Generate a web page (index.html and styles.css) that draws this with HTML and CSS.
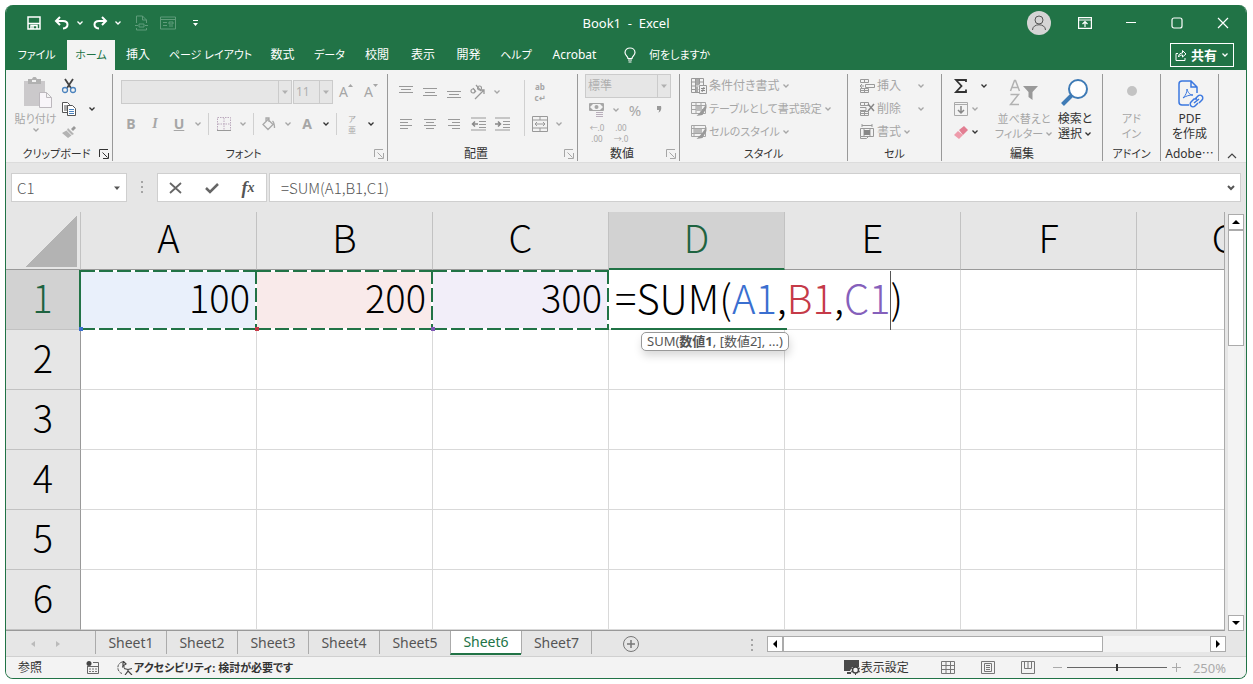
FILE: index.html
```html
<!DOCTYPE html>
<html lang="ja">

<head>
  <meta charset="UTF-8">
  <meta name="viewport" content="width=device-width, initial-scale=1.0">
  <title>Book1 - Excel</title>
  <link rel="stylesheet" href="styles.css">
</head>

<body>
  <!-- 共通アイコン -->
  <svg class="defs" width="0" height="0">
    <symbol id="chev" viewBox="0 0 8 8"><path d="M1.500 2.500 4 5l2.500-2.500" fill="none" stroke="currentColor" stroke-width="1.300"/></symbol>
    <symbol id="launch" viewBox="0 0 10 10"><path d="M.5 8V.5H9M3.500 3.500l5 5M9.500 4v5.500H4" fill="none" stroke="currentColor"/></symbol>
    <symbol id="tri" viewBox="0 0 8 8"><path d="M1 2.500h6L4 6z" fill="currentColor"/></symbol>
  </svg>

  <div class="window">
    <header class="titlebar">
      <div class="quick">
        <button class="q-save" aria-label="保存"><svg width="14" height="14" viewBox="0 0 14 14"><path d="M1 1h12v12H1zM1.500 7.500h11M4 13V9.500h6V13M6 10v3" fill="none" stroke="#fff" stroke-width="1.500"/></svg></button>
        <button class="q-undo" aria-label="元に戻す"><svg width="16" height="14" viewBox="0 0 16 14"><path d="M6 1 2 5l4 4M2 5h7c6 0 6 7 0 7.500" fill="none" stroke="#fff" stroke-width="2"/></svg></button>
        <button class="q-chev" aria-label="元に戻す一覧"><svg width="8" height="8"><use href="#chev"/></svg></button>
        <button class="q-undo" aria-label="やり直し"><svg width="16" height="14" viewBox="0 0 16 14"><path d="m10 1 4 4-4 4M14 5H7c-6 0-6 7 0 7.500" fill="none" stroke="#fff" stroke-width="2"/></svg></button>
        <button class="q-chev" aria-label="やり直し一覧"><svg width="8" height="8"><use href="#chev"/></svg></button>
        <button class="q-dim" aria-label="ページ"><svg width="13" height="16" viewBox="0 0 13 16"><path d="M1.500 8V1h6l4 4v3M7.500 1v4h4M1.500 13v2h10v-2M0 10.500h3M10 10.500h3M4 9h5v3H4z" fill="none" stroke="currentColor"/></svg></button>
        <button class="q-dim" aria-label="フォーム"><svg width="16" height="14" viewBox="0 0 16 14"><path d="M.5 1h15v12H.5zM.5 3.500h15M3 6.500h4M3 9.500h4M9 6h4v2H9zM9 10h4" fill="none" stroke="currentColor"/></svg></button>
        <button class="q-more" aria-label="カスタマイズ"><svg width="8" height="8" viewBox="0 0 8 8"><path d="M2 1h5v1H2zM2 4h5L4.500 7z" fill="#fff"/></svg></button>
      </div>
      <div class="doc-title">Book1&nbsp; -&nbsp; Excel</div>
      <div class="win-buttons">
        <button aria-label="アカウント"><svg width="24" height="24" viewBox="0 0 24 24"><circle cx="12" cy="12" r="12" fill="#d5d5d5"/><circle cx="12" cy="9" r="4" fill="none" stroke="#555"/><path d="M5.500 19c0-7 13-7 13 0" fill="none" stroke="#555"/></svg></button>
        <button aria-label="リボン表示"><svg width="14" height="12" viewBox="0 0 14 12"><path d="M.6.600h12.800v10.800H.6zM.6 3h12.800M7 10V5M4.500 7 7 4.500 9.500 7" fill="none" stroke="#fff" stroke-width="1.200"/></svg></button>
        <button aria-label="最小化"><svg width="12" height="12"><path d="M1 5.500h10" stroke="#fff"/></svg></button>
        <button aria-label="最大化"><svg width="12" height="12"><rect x="1" y="1" width="10" height="10" rx="2" fill="none" stroke="#fff" stroke-width="1.200"/></svg></button>
        <button aria-label="閉じる"><svg width="12" height="12"><path d="m1 1 10 10M11 1 1 11" stroke="#fff" stroke-width="1.200"/></svg></button>
      </div>
    </header>

    <nav class="tabs">
      <div class="tab-list">
        <button class="kana">ファイル</button>
        <button class="kana active">ホーム</button>
        <button>挿入</button>
        <button class="kana">ページ レイアウト</button>
        <button>数式</button>
        <button class="kana">データ</button>
        <button>校閲</button>
        <button>表示</button>
        <button>開発</button>
        <button class="kana">ヘルプ</button>
        <button>Acrobat</button>
      </div>
      <button class="tell kana"><svg width="12" height="16" viewBox="0 0 12 16"><path d="M4 11.500C4 9 1 8.500 1 5.500 1-.5 11-.5 11 5.500c0 3-3 3.500-3 6zM4 13h4M4.500 15h3" fill="none" stroke="#fff" stroke-width="1.200"/></svg>何をしますか</button>
      <button class="share"><svg width="12" height="12" viewBox="0 0 12 12"><path d="M3 4.500H1v7h9V9M3.500 8c0-3 2-4 4-4V1.500L11 5 7.500 8V6c-2 0-3 .5-4 2z" fill="none" stroke="#fff"/></svg>共有<svg width="8" height="8"><use href="#chev"/></svg></button>
    </nav>

    <section class="ribbon">
      <div class="group g-clip">
        <div class="body">
          <button class="big w-paste" disabled>
            <svg width="32" height="34" viewBox="0 0 32 34"><path d="M4 4h21v25H4z" fill="#cbc9cb"/><path d="M8 2h4c1-3 4-3 5 0h4v5H8z" fill="#b1b1b1"/><path d="M12 3h4v2h-4z" fill="#f3f3f3"/><path d="M19.500 15.500h7l5 5v10h-12zM26.500 15.500v5h5" fill="#f8f5f9" stroke="#bcb8bd"/></svg>
            <span class="kana">貼り付け</span>
            <svg width="8" height="8"><use href="#chev"/></svg>
          </button>
          <div class="stack">
            <button aria-label="切り取り"><svg width="16" height="16" viewBox="0 0 16 16"><path d="m4 1 6 9M12 1 6 10" stroke="#444" stroke-width="1.800"/><circle cx="4" cy="12" r="2.500" fill="none" stroke="#4a82bd" stroke-width="1.300"/><circle cx="12" cy="12" r="2.500" fill="none" stroke="#4a82bd" stroke-width="1.300"/></svg></button>
            <button aria-label="コピー"><svg width="16" height="16" viewBox="0 0 16 16"><path d="M1.500 1.500h5l2 2v8h-7zM3 5h4M3 7h4M3 9h3" fill="#fff" stroke="#555"/><path d="M6.500 4.500h5l3 3v7h-8z" fill="#fff" stroke="#555"/><path d="M8 8.500h5M8 10.500h5M8 12.500h5" stroke="#4a82bd"/></svg></button>
            <button disabled aria-label="書式のコピー"><svg width="16" height="16" viewBox="0 0 16 16"><path d="m10 5 3-3 2 2-3 3z" fill="#999"/><path d="m7 4 6 6-2 1-5-5zM5.500 6.500l5 5L7 14l-6-5z" fill="#b3b3b3"/></svg></button>
          </div>
          <button class="chev-on" aria-label="コピー一覧"><svg width="8" height="8"><use href="#chev"/></svg></button>
        </div>
        <footer><span class="kana">クリップボード</span><button class="launch on" aria-label="クリップボードの詳細"><svg width="10" height="10"><use href="#launch"/></svg></button></footer>
      </div>

      <div class="group g-font">
        <div class="body col">
          <div class="row r-top">
            <div class="combo font-name"><select disabled aria-label="フォント"><option></option></select><svg width="8" height="8"><use href="#tri"/></svg></div>
            <div class="combo font-size"><select disabled aria-label="フォント サイズ"><option>11</option></select><svg width="8" height="8"><use href="#tri"/></svg></div>
            <button class="b24 grow" disabled aria-label="フォント サイズの拡大">A<svg width="5" height="4"><path d="m0 3 2.500-3L5 3z" fill="#a6a6a6"/></svg></button>
            <button class="b24 grow" disabled aria-label="フォント サイズの縮小">A<svg width="5" height="4"><path d="m0 0 2.500 3L5 0z" fill="#a6a6a6"/></svg></button>
          </div>
          <div class="row">
            <button class="b24 bold" disabled>B</button>
            <button class="b24 ital" disabled>I</button>
            <button class="b24 under" disabled>U</button>
            <button class="b14" disabled><svg width="8" height="8"><use href="#chev"/></svg></button>
            <i class="sep"></i>
            <button class="b24" disabled aria-label="罫線"><svg width="14" height="14" viewBox="0 0 14 14"><path d="M.5 13V.500h13V13M7 1v12M1 7h12" fill="none" stroke="#bba9bd" stroke-dasharray="1.500 1"/><path d="M0 13.500h14" stroke="#999"/></svg></button>
            <button class="b14" disabled><svg width="8" height="8"><use href="#chev"/></svg></button>
            <i class="sep"></i>
            <button class="b24" disabled aria-label="塗りつぶし"><svg width="14" height="15" viewBox="0 0 14 15"><path d="m1 7.500 5-5 5 5L6 12.500zM4 5V1h3v4M10.500 4c2 2 2 4 2 7" fill="none" stroke="#a9a9a9" stroke-width="1.300"/></svg></button>
            <button class="b14" disabled><svg width="8" height="8"><use href="#chev"/></svg></button>
            <button class="b24 fcolor" disabled>A</button>
            <button class="b14 on"><svg width="8" height="8"><use href="#chev"/></svg></button>
            <i class="sep"></i>
            <button class="b24 ruby" disabled><span>ア</span><span>亜</span></button>
            <button class="b14 on"><svg width="8" height="8"><use href="#chev"/></svg></button>
          </div>
        </div>
        <footer><span class="kana">フォント</span><button class="launch" disabled aria-label="フォントの詳細"><svg width="10" height="10"><use href="#launch"/></svg></button></footer>
      </div>

      <div class="group g-align">
        <div class="body">
          <div class="align-left">
            <div class="row r-top">
              <button class="b24" disabled aria-label="上揃え"><svg width="14" height="14"><path d="M0 1.500h14M2 4.500h10M0 7.500h14" stroke="#999"/></svg></button>
              <button class="b24" disabled aria-label="上下中央揃え"><svg width="14" height="14"><path d="M0 3.500h14M2 7.500h10M0 10.500h14" stroke="#999"/></svg></button>
              <button class="b24" disabled aria-label="下揃え"><svg width="14" height="14"><path d="M0 6.500h14M2 9.500h10M0 12.500h14" stroke="#999"/></svg></button>
              <button class="b24" disabled aria-label="方向"><svg width="18" height="18" viewBox="0 0 18 18"><path d="m6 16 9-9M11 7h4v4" fill="none" stroke="#999" stroke-width="1.300"/><circle cx="4" cy="8" r="2" fill="none" stroke="#999" stroke-width="1.200"/><path d="m4 5 3 4M7 2l5 6" stroke="#999" stroke-width="1.200"/><circle cx="10.500" cy="5" r="2" fill="none" stroke="#999" stroke-width="1.200"/></svg></button>
              <button class="b14" disabled><svg width="8" height="8"><use href="#chev"/></svg></button>
            </div>
            <div class="row">
              <button class="b24" disabled aria-label="左揃え"><svg width="12" height="12"><path d="M0 1.500h12M0 4.500h8M0 7.500h12M0 10.500h8" stroke="#999"/></svg></button>
              <button class="b24" disabled aria-label="中央揃え"><svg width="12" height="12"><path d="M0 1.500h12M2 4.500h8M0 7.500h12M2 10.500h8" stroke="#999"/></svg></button>
              <button class="b24" disabled aria-label="右揃え"><svg width="12" height="12"><path d="M0 1.500h12M4 4.500h8M0 7.500h12M4 10.500h8" stroke="#999"/></svg></button>
              <button class="b24" disabled aria-label="インデント減"><svg width="15" height="14"><path d="M0 1h15M8 4.500h7M8 7.500h7M8 10.500h7M0 13h15" stroke="#999"/><path d="M7 7H1.500M4 4.500 1.500 7 4 9.500" fill="none" stroke="#888" stroke-width="1.500"/></svg></button>
              <button class="b24" disabled aria-label="インデント増"><svg width="15" height="14"><path d="M0 1h15M8 4.500h7M8 7.500h7M8 10.500h7M0 13h15" stroke="#999"/><path d="M0 7h5.500M3 4.500 5.500 7 3 9.500" fill="none" stroke="#888" stroke-width="1.500"/></svg></button>
            </div>
          </div>
          <i class="sep tall"></i>
          <div class="align-right">
            <div class="row r-top"><button class="b24 wrap" disabled><span>ab</span><span>c↵</span></button></div>
            <div class="row">
              <button class="b24" disabled aria-label="結合"><svg width="16" height="16" viewBox="0 0 16 16"><path d="M.5.500h15v15H.5zM.5 4h15M.5 12h15M8 .5V4M8 12v3.500M3 8h10M5 6 3 8l2 2M11 6l2 2-2 2" fill="none" stroke="#999"/></svg></button>
              <button class="b14" disabled><svg width="8" height="8"><use href="#chev"/></svg></button>
            </div>
          </div>
        </div>
        <footer><span>配置</span><button class="launch" disabled aria-label="配置の詳細"><svg width="10" height="10"><use href="#launch"/></svg></button></footer>
      </div>

      <div class="group g-num">
        <div class="body col">
          <div class="combo format"><select disabled aria-label="表示形式"><option>標準</option></select><svg width="8" height="8"><use href="#tri"/></svg></div>
          <div class="row r-small">
            <button class="b24" disabled aria-label="通貨"><svg width="16" height="16" viewBox="0 0 16 16"><path d="M.5 1.500h14v7H.5z" fill="none" stroke="#a6a6a6"/><path d="M1 2h3L1 5zM11 2h3v3zM1 5l3 3H1zM14 5v3h-3z" fill="#a6a6a6"/><circle cx="7.500" cy="5" r="2" fill="#a6a6a6"/><path d="M6 9h9v7H6z" fill="#f3f3f3"/><path d="M7 10.500h7M7 12.500h7M7 14.500h7" stroke="#b9aebb"/></svg></button>
            <button class="b14" disabled><svg width="8" height="8"><use href="#chev"/></svg></button>
            <button class="b24 pct" disabled>%</button>
            <button class="b24" disabled aria-label="桁区切り"><svg width="6" height="9"><path d="M1 1h4c1 4-1 6-3 7 1-1 1-2 1-3H1z" fill="#999"/></svg></button>
          </div>
          <div class="row r-small">
            <button class="b24 dec" disabled><span>←.0</span><span>.00</span></button>
            <button class="b24 dec" disabled><span>.00</span><span>→.0</span></button>
          </div>
        </div>
        <footer><span>数値</span><button class="launch" disabled aria-label="数値の詳細"><svg width="10" height="10"><use href="#launch"/></svg></button></footer>
      </div>

      <div class="group g-style">
        <div class="body list">
          <button disabled><svg width="16" height="16" viewBox="0 0 16 16"><path d="M.5.500h12v14H.5zM.5 4h12M.5 8h7M.5 11.500h7M4.500.500v14M8.500.500v6" fill="none" stroke="#999"/><path d="M5 1h3v6H5zM5 9h2v5H5z" fill="#aaa"/><path d="M8.500 7.500h7v8h-7z" fill="#f3f3f3" stroke="#999"/><path d="M10 10.500h4M10 12.500h4M13 9l-2 5" stroke="#888"/></svg>条件付き書式<svg width="8" height="8"><use href="#chev"/></svg></button>
          <button class="kana" disabled><svg width="16" height="16" viewBox="0 0 16 16"><path d="M.5 1.500h14v11H.5zM.5 4.500h14M.5 8.500h14M5 1.500v11M10 1.500v11" fill="none" stroke="#a5a5a5"/><path d="M5 5h6v5H5z" fill="#bbb"/><path d="m15.500 3-6 8-4 4 6-1 4-7z" fill="#999"/></svg>テーブルとして書式設定<svg width="8" height="8"><use href="#chev"/></svg></button>
          <button class="kana" disabled><svg width="16" height="16" viewBox="0 0 16 16"><path d="M.5 1.500h14v11H.5zM.5 4.500h14M.5 9.500h14M3 1.500v11" fill="none" stroke="#a5a5a5"/><path d="M3 5h8v4H3z" fill="#bbb"/><path d="m15.500 3-6 8-4 4 6-1 4-7z" fill="#999"/></svg>セルのスタイル<svg width="8" height="8"><use href="#chev"/></svg></button>
        </div>
        <footer><span class="kana">スタイル</span></footer>
      </div>

      <div class="group g-cell">
        <div class="body list">
          <button disabled><svg width="16" height="16" viewBox="0 0 16 16"><path d="M1.500 1.500h8v3h-8zM5.500 1.500v3M1.500 10.500h8v4h-8zM5.500 10.500v4M1.500 12.500h8M6.500 6.500h9v3h-9zM5 8H1M3 6 1 8l2 2" fill="none" stroke="#999"/></svg>挿入<svg class="last" width="8" height="8"><use href="#chev"/></svg></button>
          <button disabled><svg width="16" height="16" viewBox="0 0 16 16"><path d="M1.500 1.500h8v3h-8zM5.500 1.500v3M1.500 10.500h8v4h-8zM5.500 10.500v4M1.500 12.500h8M1 6.500h6v3H1" fill="none" stroke="#999"/><path d="m9 3 6 7M15 3l-6 7" stroke="#888" stroke-width="1.500"/></svg>削除<svg class="last" width="8" height="8"><use href="#chev"/></svg></button>
          <button disabled><svg width="16" height="16" viewBox="0 0 16 16"><path d="M3 1.500h10M3 0v3M13 0v3M1.500 4.500h13v8h-13zM5 4v8M11 4v8M1.500 12.500v2h6l2-2" fill="none" stroke="#999"/><path d="M5 6h6v5H5z" fill="#888"/></svg>書式<svg width="8" height="8"><use href="#chev"/></svg></button>
        </div>
        <footer><span class="kana">セル</span></footer>
      </div>

      <div class="group g-edit">
        <div class="body">
          <div class="list edit-list">
            <button class="on" aria-label="合計"><svg width="16" height="16" viewBox="0 0 16 16"><path d="M13 4V2H3l5.500 6L3 14h10v-2.500" fill="none" stroke="#333" stroke-width="1.800"/></svg><svg class="last" width="8" height="8"><use href="#chev"/></svg></button>
            <button disabled aria-label="フィル"><svg width="16" height="16" viewBox="0 0 16 16"><path d="M1.500 1.500h13v13h-13zM1.500 3.500h13" fill="none" stroke="#aaa"/><path d="M8 5v7M5 9l3 3 3-3" fill="none" stroke="#888" stroke-width="1.500"/></svg><svg width="8" height="8"><use href="#chev"/></svg></button>
            <button class="on" aria-label="クリア"><svg width="16" height="16" viewBox="0 0 16 16"><path d="m1 11 4-4 5 4-4 4z" fill="#ee9bab"/><path d="m6 6 5-4 4 4-5 5z" fill="#e27e92"/></svg><svg width="8" height="8"><use href="#chev"/></svg></button>
          </div>
          <button class="big w-sort kana" disabled>
            <svg width="30" height="32" viewBox="0 0 30 32"><path d="m1.500 13 4-10.500h1L10.500 13M3 9.500h6M1.500 16.500h8L1.500 26.500h8.500" fill="none" stroke="#b2b2b2" stroke-width="1.500"/><path d="M14 8h15l-5.500 6v8l-4-3v-5z" fill="#999"/></svg>
            <span>並べ替えと</span><span>フィルター<svg width="8" height="8"><use href="#chev"/></svg></span>
          </button>
          <button class="big on w-find kana">
            <svg width="28" height="32" viewBox="0 0 28 32"><circle cx="17" cy="11" r="9" fill="#fff" stroke="#3f7bb6" stroke-width="2"/><path d="m10.500 17.500-9 9" stroke="#3f7bb6" stroke-width="4"/></svg>
            <span>検索と</span><span>選択<svg width="8" height="8"><use href="#chev"/></svg></span>
          </button>
        </div>
        <footer><span>編集</span></footer>
      </div>

      <div class="group g-addin">
        <div class="body">
          <button class="big kana" disabled><svg width="28" height="32"><circle cx="14" cy="14" r="5" fill="#c3c3c3"/></svg><span>アド</span><span>イン</span></button>
        </div>
        <footer><span class="kana">アドイン</span></footer>
      </div>

      <div class="group g-adobe">
        <div class="body">
          <button class="big on"><svg width="28" height="32" viewBox="0 0 28 32"><path d="M13 27H6c-2 0-3-1-3-3V6c0-2 1-3 3-3h9l6 6v6M15 3v6h6" fill="none" stroke="#3b78e0" stroke-width="1.500"/><path d="M7 20c3-3 4-6 4-9 1 4 3 6 6 6-4 0-7 1-10 3z" fill="none" stroke="#3b78e0"/><path d="m19 21 3-3c1-1 3-1 4 0s1 3 0 4l-3 3M21 21l-3 0-3 3c-1 1-1 3 0 4s3 1 4 0l3-3M18 25l5-4" fill="none" stroke="#3b78e0" stroke-width="1.500"/></svg><span>PDF</span><span>を作成</span></button>
        </div>
        <footer><span>Adobe⋯</span></footer>
      </div>

      <button class="collapse" aria-label="リボンを折りたたむ"><svg width="10" height="8"><path d="m1 6 4-4 4 4" fill="none" stroke="#444" stroke-width="1.200"/></svg></button>
    </section>

    <section class="formula-bar">
      <div class="name-box"><input type="text" value="C1" aria-label="名前ボックス"><svg width="8" height="8"><use href="#tri"/></svg></div>
      <svg class="dots" width="4" height="12"><path d="M1 0h2v2H1zM1 5h2v2H1zM1 10h2v2H1z" fill="#a5a5a5"/></svg>
      <div class="fx-buttons">
        <button aria-label="キャンセル"><svg width="14" height="12"><path d="m1 1 11 10M12 1 1 11" stroke="#666" stroke-width="1.800"/></svg></button>
        <button aria-label="入力"><svg width="14" height="12"><path d="m1 6 4 4 8-8" fill="none" stroke="#666" stroke-width="2.500"/></svg></button>
        <button class="fx" aria-label="関数の挿入">f<small>x</small></button>
      </div>
      <div class="formula"><input type="text" value="=SUM(A1,B1,C1)" aria-label="数式バー"><svg width="8" height="8" viewBox="0 0 8 8"><path d="m1 2 3 3 3-3" fill="none" stroke="#555" stroke-width="2"/></svg></div>
    </section>

    <main class="work">
      <div class="sheet">
        <table>
          <colgroup><col class="c-head"><col span="7"></colgroup>
          <thead>
            <tr><th class="corner"></th><th>A</th><th>B</th><th>C</th><th class="sel">D</th><th>E</th><th>F</th><th>G</th></tr>
          </thead>
          <tbody>
            <tr>
              <th class="sel">1</th>
              <td class="ref blue">100</td>
              <td class="ref red">200</td>
              <td class="ref purple">300</td>
              <td class="edit" colspan="2">=SUM(<span class="t-blue">A1</span>,<span class="t-red">B1</span>,<span class="t-purple">C1</span><i class="caret"></i>)
                <div class="tip">SUM(<b>数値1</b>, [数値2], ...)</div>
              </td>
              <td></td><td></td>
            </tr>
            <tr><th>2</th><td></td><td></td><td></td><td></td><td></td><td></td><td></td></tr>
            <tr><th>3</th><td></td><td></td><td></td><td></td><td></td><td></td><td></td></tr>
            <tr><th>4</th><td></td><td></td><td></td><td></td><td></td><td></td><td></td></tr>
            <tr><th>5</th><td></td><td></td><td></td><td></td><td></td><td></td><td></td></tr>
            <tr><th>6</th><td></td><td></td><td></td><td></td><td></td><td></td><td></td></tr>
          </tbody>
        </table>
      </div>
      <div class="vscroll">
        <button aria-label="上へ"><svg width="8" height="8"><path d="M0 6h8L4 2z"/></svg></button>
        <div class="track"><div class="thumb"></div></div>
        <button aria-label="下へ"><svg width="8" height="8"><path d="M0 2h8L4 6z"/></svg></button>
      </div>
    </main>

    <div class="sheet-bar">
      <div class="arrows">
        <button disabled aria-label="前のシート"><svg width="6" height="8"><path d="M5 1v6L1 4z" fill="#bbb"/></svg></button>
        <button disabled aria-label="次のシート"><svg width="6" height="8"><path d="M1 1v6l4-3z" fill="#bbb"/></svg></button>
      </div>
      <div class="sheets">
        <button>Sheet1</button>
        <button>Sheet2</button>
        <button>Sheet3</button>
        <button>Sheet4</button>
        <button>Sheet5</button>
        <button class="active">Sheet6</button>
        <button>Sheet7</button>
      </div>
      <button class="add" aria-label="新しいシート"><svg width="18" height="18" viewBox="0 0 18 18"><circle cx="9" cy="9" r="7.500" fill="none" stroke="#777"/><path d="M9 5v8M5 9h8" stroke="#777" stroke-width="1.500"/></svg></button>
      <svg class="dots" width="4" height="12"><path d="M1 0h2v2H1zM1 5h2v2H1zM1 10h2v2H1z" fill="#a5a5a5"/></svg>
      <div class="hscroll">
        <button aria-label="左へ"><svg width="8" height="8"><path d="M6 0v8L2 4z"/></svg></button>
        <div class="track"><div class="thumb"></div></div>
        <button aria-label="右へ"><svg width="8" height="8"><path d="M2 0v8l4-4z"/></svg></button>
      </div>
    </div>

    <footer class="status">
      <span class="mode">参照</span>
      <svg class="macro" width="13" height="13" viewBox="0 0 13 13"><path d="M1.500 5v7.500h11v-11H7M1.500 5.500h11" fill="none" stroke="#666"/><circle cx="3" cy="2.500" r="2.500" fill="#444"/><path d="M3 8h8M3 10.500h8" stroke="#777" stroke-dasharray="2 1"/></svg>
      <button class="access kana"><svg width="16" height="14" viewBox="0 0 16 14"><path d="M5 1C-1 3 0 11 5 12.500" fill="none" stroke="#555" stroke-dasharray="3 1"/><path d="M6 0v5L9 3zM7 7.500l4 1 4-1M11 8v2l-3 4M11 10l4 4M5 6h3" fill="none" stroke="#444" stroke-width="1.200"/></svg>アクセシビリティ: 検討が必要です</button>
      <button class="disp"><svg width="17" height="15" viewBox="0 0 17 15"><path d="M0 0h15v7H8l-2 4H0zM3 12h4v2H3z" fill="#4a4a4a"/><circle cx="11.500" cy="10" r="3" fill="#f3f3f3" stroke="#444" stroke-width="1.500"/><path d="M11.500 5v2M11.500 13v2M7 8l2 1M14 11l2 1M7 12l2-1M14 9l2-1" stroke="#444"/></svg>表示設定</button>
      <button class="view" aria-label="標準"><svg width="14" height="13"><path d="M.5.500h13v12H.5zM.5 4.500h13M.5 8.500h13M5 .5v12M9.500.500v12" fill="none" stroke="#777"/></svg></button>
      <button class="view" aria-label="ページ レイアウト"><svg width="14" height="13"><path d="M.5.500h13v12H.5zM3.500 2.500h7v8h-7zM5 4.500h4M5 6.500h4M5 8.500h4" fill="none" stroke="#777"/></svg></button>
      <button class="view" aria-label="改ページ"><svg width="14" height="13"><path d="M.5.500h13v12H.5zM3.500.500v7h7v-7M7 .5v7" fill="none" stroke="#777"/></svg></button>
      <div class="zoom">
        <button disabled aria-label="縮小"><svg width="9" height="9"><path d="M0 4.500h9" stroke="#aaa"/></svg></button>
        <input type="range" min="0" max="100" value="50" aria-label="ズーム">
        <button disabled aria-label="拡大"><svg width="9" height="9"><path d="M0 4.500h9M4.500 0v9" stroke="#aaa"/></svg></button>
      </div>
      <span class="pct-label">250%</span>
    </footer>
  </div>
</body>

</html>
```
FILE: styles.css
```css
* {
  box-sizing: border-box;
}

body {
  margin: 0;
  padding: 5px 6px 5px 5px;
  height: 100vh;
  background: #fff;
  font: 12px/16px "Noto Sans", "Noto Sans CJK JP", sans-serif;
  font-feature-settings: "palt";
  color: #333;
}

button,
input,
select {
  font: inherit;
  font-feature-settings: inherit;
  color: inherit;
  background: none;
  border: 0;
  padding: 0;
  margin: 0;
}

button {
  display: flex;
  align-items: center;
  justify-content: center;
  white-space: nowrap;
}

button:disabled {
  color: #a6a6a6;
}

svg {
  flex: none;
}

.defs {
  position: absolute;
}

/* カナの多いラベルは少し小さく */
.kana {
  font-size: 11px;
}

.window {
  height: 100%;
  display: flex;
  flex-direction: column;
  overflow: hidden;
  border: 1px solid #217346;
  border-top: 0;
  border-radius: 8px;
  background: #e6e6e6;
}

/* タイトルバー */
.titlebar {
  flex: none;
  height: 35px;
  display: grid;
  grid-template-columns: 1fr auto 1fr;
  align-items: center;
  background: #217346;
  color: #fff;
}

.quick {
  display: flex;
  align-items: center;
  padding-left: 20px;
}

.q-save {
  width: 16px;
  margin-right: 10px;
}

.q-undo {
  width: 20px;
}

.q-chev {
  width: 16px;
  margin-right: 2px;
}

.q-dim {
  width: 28px;
  margin-left: -1px;
  color: #5f9c7a;
}

.q-more {
  width: 26px;
}

.doc-title {
  font-size: 13px;
}

.win-buttons {
  display: flex;
  justify-content: flex-end;
}

.win-buttons button {
  width: 46px;
  height: 32px;
}

/* リボンのタブ */
.tabs {
  flex: none;
  height: 30px;
  display: flex;
  align-items: center;
  background: #217346;
  color: #fff;
}

.tab-list {
  height: 100%;
  display: grid;
  grid-template-columns: 61px 48px 46px 99px 45px 49px 46px 46px 45px 50px 67px;
}

.tab-list .active {
  background: #f3f3f3;
  color: #217346;
}

.tell {
  gap: 13px;
  margin-left: 16px;
}

.share {
  gap: 4px;
  width: 64px;
  height: 24px;
  margin: 0 12px 0 auto;
  border: 1px solid #fff;
  font-size: 13px;
  font-weight: bold;
}

/* リボン */
.ribbon {
  flex: none;
  display: flex;
  height: 93px;
  padding: 4px 0 1px;
  background: #f3f3f3;
  border-bottom: 1px solid #dcdcdc;
}

.group {
  flex: none;
  display: flex;
  flex-direction: column;
  border-right: 1px solid #999;
}

.group .body {
  flex: 1;
  display: flex;
}

.group .body.col {
  flex-direction: column;
}

.group footer {
  height: 14px;
  display: flex;
  align-items: center;
  line-height: 14px;
}

.group footer span {
  flex: 1;
  text-align: center;
}

.launch {
  width: 10px;
  margin-right: 3px;
}

.g-clip {
  width: 107px;
  padding-left: 8px;
}

.g-font {
  width: 275px;
}

.g-align {
  width: 190px;
}

.g-num {
  width: 102px;
}

.g-style {
  width: 168px;
}

.g-cell {
  width: 94px;
}

.g-edit {
  width: 161px;
}

.g-addin,
.g-adobe {
  width: 58px;
}

.g-addin .big,
.g-adobe .big {
  width: 100%;
}

.big {
  flex-direction: column;
  justify-content: flex-start;
  height: 70px;
  padding-top: 3px;
  line-height: 15px;
}

.big span {
  display: flex;
  align-items: center;
  gap: 2px;
}

.big > svg:first-child {
  height: 34px;
}

.w-paste {
  width: 43px;
}

.w-sort {
  width: 58px;
  margin-left: 7px;
}

.w-find {
  width: 44px;
}

.w-find span {
  font-size: 12px;
}

.stack button {
  width: 24px;
  height: 23px;
}

.chev-on {
  width: 22px;
  height: 69px;
}

.row {
  display: flex;
  align-items: center;
  height: 28px;
}

.r-top {
  height: 36px;
}

.g-font .row {
  padding-left: 6px;
}

.g-font .r-top {
  padding-left: 8px;
  gap: 1px;
}

.b24 {
  width: 24px;
  height: 24px;
}

.b14 {
  width: 14px;
  height: 24px;
}

.on {
  color: #333;
}

.sep {
  width: 1px;
  height: 22px;
  margin: 0 3px;
  background: #d0d0d0;
}

.sep.tall {
  height: 56px;
  margin: 6px 3px 0 4px;
}

.combo {
  display: flex;
  align-items: center;
  height: 24px;
  border: 1px solid #cbcbcb;
  background: #e6e6e6;
  color: #b0b0b0;
}

.combo select {
  flex: 1;
  min-width: 0;
  height: 100%;
  padding-left: 2px;
  appearance: none;
  border-right: 1px solid #cbcbcb;
  opacity: 1;
}

.combo svg {
  margin: 0 2px;
}

.font-name {
  width: 171px;
}

.font-size {
  width: 40px;
}

.grow {
  font-size: 14px;
}

.grow svg {
  align-self: flex-start;
  margin-top: 4px;
}

.bold,
.fcolor {
  font-size: 14px;
  font-weight: bold;
}

.ital {
  font: italic bold 14px "Liberation Serif", serif;
}

.under {
  font-size: 14px;
  font-weight: bold;
  text-decoration: underline;
}

.ruby,
.wrap,
.dec {
  flex-direction: column;
  font-size: 8px;
  line-height: 11px;
}

.wrap {
  font-weight: bold;
}

.align-left {
  padding-left: 6px;
  width: 132px;
}

.format {
  width: 86px;
  margin-left: 7px;
}

.r-small {
  height: 23px;
  padding-left: 7px;
}

.pct {
  font-size: 15px;
}

.list {
  flex-direction: column;
  padding-left: 11px;
}

.list button {
  height: 23px;
  gap: 2px;
  justify-content: flex-start;
}

.g-cell .list button {
  width: 66px;
}

.list .last {
  margin-left: auto;
}

.edit-list button {
  width: 35px;
}

.collapse {
  margin: auto 0 0 8px;
  height: 10px;
}

/* 数式バー */
.formula-bar {
  flex: none;
  height: 49px;
  display: flex;
  align-items: flex-start;
  padding: 10px 5px 0;
  color: #555;
}

.name-box,
.fx-buttons,
.formula {
  display: flex;
  align-items: center;
  height: 29px;
  background: #fff;
  border: 1px solid #cfcfcf;
}

.name-box {
  width: 116px;
}

.name-box input,
.formula input {
  flex: 1;
  min-width: 0;
  font: 15px/20px "Noto Sans CJK JP", sans-serif;
  font-weight: 300;
  font-feature-settings: normal;
}

.name-box input {
  padding-left: 5px;
}

.name-box svg,
.formula svg {
  margin-right: 5px;
}

.formula-bar .dots {
  margin: 8px 13px 0;
}

.fx-buttons {
  width: 110px;
}

.fx-buttons button {
  flex: 1;
}

.fx {
  font: italic bold 18px/20px "Liberation Serif", serif;
}

.fx small {
  font-size: 14px;
}

.formula {
  flex: 1;
  margin-left: 2px;
}

.formula input {
  padding-left: 11px;
}

/* シート */
.work {
  flex: 1;
  min-height: 0;
  display: flex;
}

.sheet {
  flex: 1;
  min-width: 0;
  overflow: hidden;
  border-bottom: 1px solid #999;
  border-right: 1px solid #aaa;
  background: #fff;
}

table {
  table-layout: fixed;
  width: 1307px;
  border-spacing: 0;
  font: 38px/54px "Noto Sans CJK JP", sans-serif;
  font-weight: 300;
  font-feature-settings: normal;
  color: #000;
}

col {
  width: 176px;
}

.c-head {
  width: 75px;
}

th {
  padding: 0;
  font-weight: inherit;
  vertical-align: top;
  background: #e6e6e6;
}

thead th {
  height: 58px;
  border-right: 1px solid #c2c2c2;
  border-bottom: 1px solid #999;
  line-height: 50px;
}

thead .sel {
  background: #d2d2d2;
  border-bottom: 2px solid #217346;
  color: #1e6340;
}

.corner {
  background: linear-gradient(135deg, #e6e6e6 50%, #b3b3b3 50%) 19px 4px / 52px 51px no-repeat #e6e6e6;
}

tbody th {
  height: 60px;
  border-right: 1px solid #999;
  border-bottom: 1px solid #c2c2c2;
}

tbody .sel {
  background: #d2d2d2;
  border-right: 2px solid #217346;
  color: #1e6340;
}

td {
  height: 60px;
  padding: 0 6px;
  vertical-align: top;
  border-right: 1px solid #d9d9d9;
  border-bottom: 1px solid #d9d9d9;
}

.ref {
  position: relative;
  text-align: right;
}

/* 参照範囲の点線 */
.ref::before {
  content: "";
  position: absolute;
  inset: 0 -1px -1px 0;
  background:
    repeating-linear-gradient(90deg, #217346 0 14px, #fff 14px 18px) top / 100% 2px no-repeat,
    repeating-linear-gradient(90deg, #217346 0 14px, #fff 14px 18px) bottom / 100% 2px no-repeat,
    repeating-linear-gradient(#217346 0 14px, #fff 14px 18px) right / 2px 100% no-repeat;
}

.ref::after {
  content: "";
  position: absolute;
  left: -2px;
  bottom: -2px;
  width: 4px;
  height: 4px;
  background: currentColor;
}

.blue {
  background: #e9f0fb;
}

.blue::after {
  background: #3a6fd0;
}

.red {
  background: #f9eaea;
}

.red::after {
  background: #c53a48;
}

.purple {
  background: #f2eef9;
}

.purple::after {
  background: #7e57b5;
}

.edit {
  position: relative;
  white-space: nowrap;
  font-size: 40px;
}

.edit::before {
  content: "";
  position: absolute;
  left: 2px;
  bottom: -1px;
  width: 50%;
  height: 2px;
  background: #217346;
}

.t-blue {
  color: #3a6fd0;
}

.t-red {
  color: #c53a48;
}

.t-purple {
  color: #8560bb;
}

.caret {
  position: absolute;
  top: 1px;
  width: 1px;
  height: 59px;
  background: #555;
}

.tip {
  position: absolute;
  z-index: 1;
  top: 62px;
  left: 32px;
  padding: 0 5px;
  border: 1px solid #999;
  border-radius: 5px;
  background: #fff;
  box-shadow: 1px 5px 8px rgba(0, 0, 0, .15);
  font: 13px/17px "Noto Sans", "Noto Sans CJK JP", sans-serif;
  color: #555;
}

.vscroll {
  flex: none;
  width: 21px;
  padding: 2px 2px 0 3px;
  display: flex;
  flex-direction: column;
}

.vscroll button,
.hscroll button {
  flex: none;
  width: 16px;
  height: 16px;
  background: #fff;
  border: 1px solid #ababab;
}

.track {
  flex: 1;
  background: #f3f3f3;
}

.thumb {
  background: #fff;
  border: 1px solid #ababab;
}

.vscroll .thumb {
  width: 16px;
  height: 30%;
}

/* シート見出し */
.sheet-bar {
  flex: none;
  height: 26px;
  display: flex;
  align-items: flex-start;
  border-bottom: 1px solid #d0d0d0;
  color: #555;
}

.arrows {
  display: flex;
  width: 89px;
  height: 26px;
  padding-left: 14px;
}

.arrows button {
  width: 25px;
}

.sheets {
  display: flex;
}

.sheets button {
  width: 71px;
  height: 23px;
  font-size: 14px;
  border-left: 1px solid #ababab;
}

.sheets button:last-child {
  border-right: 1px solid #ababab;
}

.sheets .active {
  height: 24px;
  background: #fff;
  color: #217346;
  border-bottom: 2px solid #217346;
}

.add {
  margin: 4px 0 0 30px;
}

.sheet-bar .dots {
  margin: 8px 13px 0 auto;
}

.hscroll {
  display: flex;
  width: 37%;
  margin: 5px 20px 0 0;
}

.hscroll .track {
  height: 16px;
}

.hscroll .thumb {
  width: 75%;
  height: 16px;
}

/* ステータスバー */
.status {
  flex: none;
  height: 21px;
  display: flex;
  align-items: center;
  padding: 0 20px 0 12px;
  background: #f3f3f3;
}

.macro {
  margin: 0 18px 0 44px;
}

.access {
  gap: 1px;
  font-weight: bold;
}

.disp {
  margin: 0 19px 0 auto;
}

.view {
  width: 40px;
}

.zoom {
  display: flex;
  align-items: center;
  margin-left: 5px;
}

.zoom input {
  width: 100px;
  height: 16px;
  margin: 0 5px;
  appearance: none;
  background: linear-gradient(#666, #666) center / 100% 1px no-repeat;
}

.zoom input::-webkit-slider-thumb {
  appearance: none;
  width: 2px;
  height: 7px;
  background: #333;
}

.pct-label {
  margin-left: 12px;
  font-size: 13px;
  color: #aaa;
}
```
